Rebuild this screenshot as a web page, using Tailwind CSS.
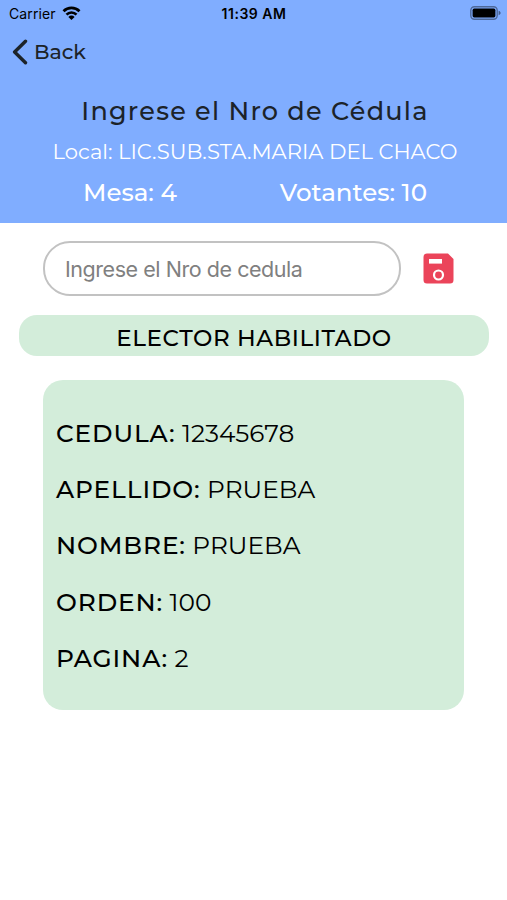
<!DOCTYPE html>
<html lang="es">
  <head>
    <meta charset="utf-8" />
    <meta name="viewport" content="width=device-width, initial-scale=1" />
    <title>Ingrese el Nro de Cédula</title>
    <script src="https://cdn.jsdelivr.net/npm/@tailwindcss/browser@4"></script>
  </head>
  <body class="bg-white font-['Montserrat','Inter',sans-serif] text-black">
    <div class="flex flex-col h-[900px] overflow-hidden">
      <header class="h-[223px] bg-[#80adff] flex flex-col">
        <!-- status bar -->
        <div class="h-7 pl-[9px] pr-[6px] grid grid-cols-3 items-center font-['Inter',sans-serif] text-sm leading-7">
          <div class="flex items-center gap-[6px]">
            <span class="tracking-[0.1px]">Carrier</span>
            <svg class="w-[19px] h-[14px] -mt-[2px]" viewBox="0 0 18 14" fill="none" stroke="#000" stroke-width="2.7">
              <path d="M1 5.2a11.3 11.3 0 0 1 16 0" />
              <path d="M4 8.6a7 7 0 0 1 10 0" />
              <path d="M9 14L5.9 10.9a4.4 4.4 0 0 1 6.2 0z" fill="#000" stroke="none" />
            </svg>
          </div>
          <span class="pr-[2px] text-center font-semibold tracking-[0.5px] whitespace-nowrap">11:39 AM</span>
          <svg class="w-[31px] h-[14px] -mt-[2px] justify-self-end" viewBox="0 0 31 14">
            <rect x="0.8" y="0.8" width="26.4" height="12.4" rx="3.6" fill="none" stroke="#000" stroke-opacity="0.4" stroke-width="1.4" />
            <rect x="2.6" y="2.6" width="22.8" height="8.8" rx="1.6" />
            <path d="M28.6 4.8v4.4c1.3-.4 2-1.2 2-2.2s-.7-1.8-2-2.2z" fill-opacity="0.45" />
          </svg>
        </div>
        <a href="#" class="flex items-center h-12 pl-3 gap-[6px] text-[#1c2329]">
          <svg class="w-4 h-[26px]" viewBox="0 0 16 26" fill="none" stroke="currentColor" stroke-width="3.4" stroke-linecap="round" stroke-linejoin="round">
            <path d="M13.5 2.2L2.6 13l10.9 10.8" />
          </svg>
          <span class="text-[20.5px] font-medium">Back</span>
        </a>
        <h1 class="mt-[17px] h-9 pl-[3px] text-center text-[25.5px] leading-9 font-medium tracking-[1.25px] text-[#1c2329] whitespace-nowrap">Ingrese el Nro de Cédula</h1>
        <p class="mt-[7px] h-8 pl-[3px] text-center text-[21.1px] leading-8 text-white whitespace-nowrap">Local: LIC.SUB.STA.MARIA DEL CHACO</p>
        <div class="mt-[6px] flex justify-between pl-[83px] pr-[80px] text-[24.5px] leading-9 font-medium text-white whitespace-nowrap">
          <span>Mesa: 4</span>
          <span>Votantes: 10</span>
        </div>
      </header>
      <main>
        <div class="mt-[18px] pl-[43px] flex items-center">
          <input type="text" placeholder="Ingrese el Nro de cedula" class="w-[358px] h-[55px] pl-5 rounded-[27px] border-2 border-[#c2c2c2] bg-white font-['Inter',sans-serif] text-[21.5px] tracking-[-0.45px] placeholder:text-[#808080]" />
          <svg class="ml-[22px] w-[31px] h-[31px]" viewBox="0 0 31 31">
            <path d="M4 .5h21l5.5 5.5v21a3.5 3.5 0 0 1-3.5 3.5H4A3.5 3.5 0 0 1 .5 27V4A3.5 3.5 0 0 1 4 .5z" fill="#eb445a" />
            <rect x="6" y="6" width="13" height="4.6" fill="#fff" />
            <circle cx="15.5" cy="22" r="4.5" fill="none" stroke="#fff" stroke-width="2.2" />
          </svg>
        </div>
        <h2 class="mt-[19px] ml-[19px] w-[470px] h-[41px] rounded-[18px] bg-[#d3edda] text-center text-[23px] leading-[46px] font-medium tracking-[0.6px]">ELECTOR HABILITADO</h2>
        <div class="mt-6 ml-[43px] w-[421px] h-[330px] rounded-[20px] bg-[#d3edda] pl-[13px] pt-[25px] text-[24.8px] leading-[56.2px] whitespace-nowrap">
          <p><span class="font-medium tracking-[0.9px]">CEDULA:</span> 12345678</p>
          <p><span class="font-medium tracking-[0.9px]">APELLIDO:</span> PRUEBA</p>
          <p><span class="font-medium tracking-[0.9px]">NOMBRE:</span> PRUEBA</p>
          <p><span class="font-medium tracking-[0.9px]">ORDEN:</span> 100</p>
          <p><span class="font-medium tracking-[0.9px]">PAGINA:</span> 2</p>
        </div>
      </main>
    </div>
  </body>
</html>
